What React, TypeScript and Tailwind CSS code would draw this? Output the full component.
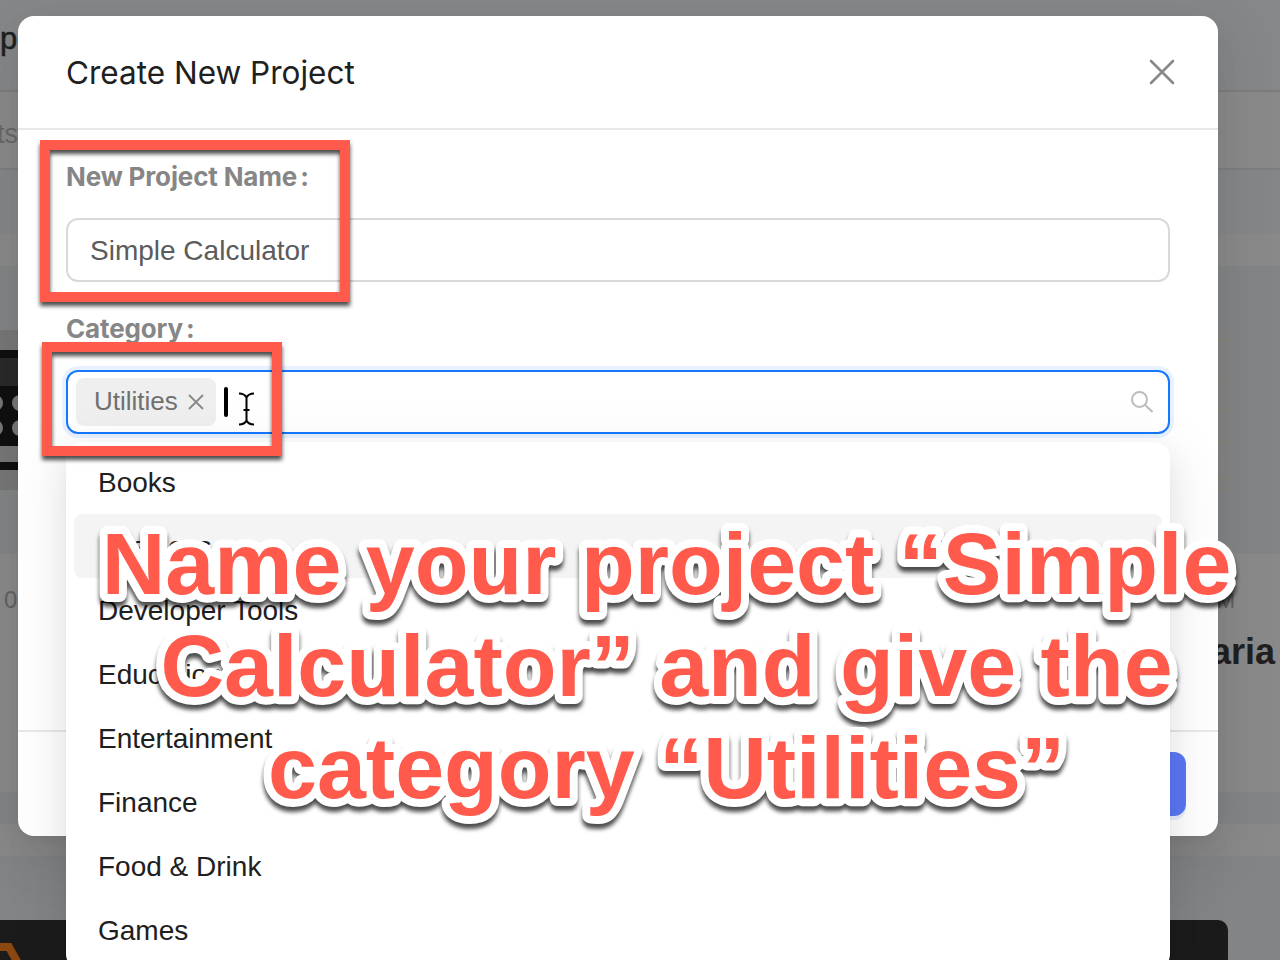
const options = ["Books", "Business", "Developer Tools", "Education", "Entertainment", "Finance", "Food & Drink", "Games"];
const lines = [
  { text: "Name your project “Simple", y: 594 },
  { text: "Calculator” and give the", y: 696 },
  { text: "category “Utilities”", y: 798 },
];

function Band({ className }: { className: string }) {
  return <div className={`w-full shrink-0 ${className}`} />;
}

function Backdrop() {
  return (
    <div className="flex h-[960px] w-[1280px] flex-col overflow-hidden bg-[#838485]">
      <div className="flex h-[92px] shrink-0 items-start border-b-2 border-[#7c7c7c] bg-[#868788] pt-[20px] text-[31px] leading-[38px] text-[#202020] [-webkit-text-stroke:0.5px_#202020]">
        <span>p</span>
      </div>
      <div className="flex h-[78px] shrink-0 items-start border-b-2 border-[#7e7e7e] bg-[#898989] pt-[24px] text-[27px] leading-[36px] text-[#686868]">
        <span className="-ml-[3px]">ts</span>
      </div>
      <Band className="h-[64px] bg-[#848688]" />
      <Band className="h-[32px] bg-[#898989]" />
      <div className="flex h-[288px] shrink-0 justify-between bg-[#838485]">
        <svg className="mt-[64px] h-[160px] w-[18px]" viewBox="0 0 18 160">
          <path fill="#777" d="M0 0h18v160H0z" />
          <path fill="#101010" d="M0 20h18v8H0zM0 56h18v60H0zM0 132h18v8H0z" />
          <path fill="#2a2a2a" d="M0 28h18v28H0z" />
          <g fill="#777">
            <circle cx="-5" cy="73" r="8" />
            <circle cx="-5" cy="98" r="8" />
            <circle cx="20" cy="73" r="8" />
            <circle cx="20" cy="98" r="8" />
          </g>
        </svg>
        <svg className="mt-[64px] mr-[52px] h-[160px] w-[12px]" viewBox="0 0 12 160" fill="none" stroke="#8a8271">
          <path d="M2 1h3a5 5 0 0 1 5 5v148a5 5 0 0 1-5 5H2M0 10.500h10M0 49.500h10M0 79.500h10M0 110.500h10M0 149.500h10M2 10l7-7M2 150l7 7" />
        </svg>
      </div>
      <div className="flex h-[238px] shrink-0 justify-between bg-[#898989]">
        <span className="mt-[31px] ml-[4px] text-[24px] leading-[30px] text-[#626262]">0</span>
        <div className="mr-[5px] flex flex-col items-end">
          <span className="mt-[32px] mr-[40px] text-[22px] leading-[30px] text-[#606060]">PM</span>
          <span className="mt-[13px] text-[36px] leading-[46px] font-bold text-[#202020]">aria</span>
        </div>
      </div>
      <Band className="h-[32px] bg-[#828486]" />
      <Band className="h-[32px] bg-[#898989]" />
      <Band className="h-[64px] bg-[#828486]" />
      <div className="flex h-[40px] w-[1228px] shrink-0 rounded-tr-[10px] bg-[#1b1b1b]">
        <svg className="h-[40px] w-[40px]" viewBox="0 0 40 40" fill="none" stroke="#8b4810" strokeWidth="8">
          <path d="M-8 27H9L20 47" />
        </svg>
      </div>
    </div>
  );
}

function Dialog() {
  return (
    <section className="absolute top-[16px] left-[18px] flex h-[820px] w-[1200px] flex-col overflow-hidden rounded-[16px] bg-white">
      <header className="flex h-[114px] shrink-0 items-center justify-between border-b-2 border-[#e8e8e8] pr-[43px] pl-[48px]">
        <h1 className="mt-[2px] font-['Inter',sans-serif] text-[31.500px] tracking-[0px] text-[#202020]">Create New Project</h1>
        <svg className="h-[26px] w-[26px]" viewBox="0 0 26 26" stroke="#888" strokeWidth="2.600" strokeLinecap="round"><path d="M2 2l22 22M24 2L2 24" /></svg>
      </header>
      <div className="flex grow flex-col px-[48px] pt-[29px] font-['Inter',sans-serif] text-[26px] leading-[36px] font-bold text-[#868686]">
        <label className="flex gap-[3px] tracking-[-0.15px]"><span>New Project Name</span><span>:</span></label>
        <div className="mt-[23px] flex h-[64px] shrink-0 items-center rounded-[12px] border-2 border-[#d9d9d9] px-[22px] pt-[2px] font-['Liberation_Sans',sans-serif] text-[28px] font-normal text-[#5b5b5b]">
          Simple Calculator
        </div>
        <label className="mt-[29px] flex gap-[3px] tracking-[-0.15px]"><span>Category</span><span>:</span></label>
        <div className="mt-[23px] flex h-[64px] shrink-0 items-center rounded-[12px] border-2 border-[#1677ff] px-[8px] font-['Liberation_Sans',sans-serif] text-[26px] font-normal text-[#707070] shadow-[0_0_0_4px_#e8f2ff]">
          <div className="flex h-[48px] w-[140px] items-center justify-between rounded-[8px] bg-[#efefef] pr-[11px] pl-[18px]">
            <span className="mb-[2px]">Utilities</span>
            <svg className="h-[18px] w-[18px]" viewBox="0 0 18 18" stroke="#888" strokeWidth="1.800"><path d="M2 2l14 14M16 2L2 16" /></svg>
          </div>
          <div className="ml-[8px] h-[30px] w-[4px] rounded-full bg-black" />
          <svg className="mt-[13px] ml-[10px] h-[34px] w-[17px]" viewBox="0 0 17 34" fill="none" stroke="#000" strokeWidth="2">
            <path d="M1 1.500c4 0 6 1.200 7.500 4C10 2.700 12 1.500 16 1.500M8.500 5v24M1 32.500c4 0 6-1 7.500-4 1.500 3 3.500 4 7.500 4M5.500 18h6" />
          </svg>
          <svg className="mr-[7px] ml-auto h-[22px] w-[22px]" viewBox="0 0 22 22" fill="none" stroke="#bdbdbd" strokeWidth="2"><circle cx="8.500" cy="8.500" r="7.500" /><path d="M14 14l7.500 7" /></svg>
        </div>
      </div>
      <footer className="flex h-[106px] shrink-0 justify-end border-t-2 border-[#e8e8e8] pt-[20px] pr-[32px]">
        <div className="h-[64px] w-[140px] rounded-[12px] bg-[#5b78f5] shadow-[0_4px_0_#e6effb]" />
      </footer>
    </section>
  );
}

export default function App() {
  return (
    <main className="relative h-[960px] w-[1288px] overflow-hidden bg-white font-['Liberation_Sans',sans-serif]">
      <Backdrop />
      <div className="absolute top-0 left-0 h-[960px] w-[1280px] overflow-hidden">
        <div className="absolute top-[16px] left-[18px] h-[820px] w-[1200px] rounded-[16px] shadow-[0_12px_32px_rgba(0,0,0,0.05),0_6px_12px_-8px_rgba(0,0,0,0.1),0_18px_56px_16px_rgba(0,0,0,0.05)]" />
        <Dialog />
        <ul className="absolute top-[442px] left-[66px] flex h-[528px] w-[1104px] flex-col rounded-[16px] bg-white p-[8px] text-[28px] text-[#202020] shadow-[0_12px_32px_rgba(0,0,0,0.08),0_6px_12px_-8px_rgba(0,0,0,0.12),0_18px_56px_16px_rgba(0,0,0,0.05)]">
          {options.map((o) => (
            <li key={o} className={`flex h-[64px] shrink-0 items-center rounded-[8px] px-[24px] pt-[2px] ${o === "Business" ? "bg-[#f4f4f4]" : ""}`}>{o}</li>
          ))}
        </ul>
        <div className="absolute top-[140px] left-[40px] h-[162px] w-[310px] border-[10px] border-[#ff5a4c] [filter:drop-shadow(0_4px_2px_rgba(0,0,0,0.7))]" />
        <div className="absolute top-[342px] left-[42px] h-[114px] w-[240px] border-[10px] border-[#ff5a4c] [filter:drop-shadow(0_4px_2px_rgba(0,0,0,0.7))]" />
        <svg className="absolute top-0 left-0 h-[960px] w-[1280px] [filter:drop-shadow(0_5px_2px_rgba(0,0,0,0.7))]" viewBox="0 0 1280 960">
          <g fill="#ff5a4c" stroke="#fff" strokeWidth="16" strokeLinejoin="round" paintOrder="stroke" fontSize="88" fontWeight="700" textAnchor="middle">
            {lines.map((l) => (
              <text key={l.y} x={666.5} y={l.y}>{l.text}</text>
            ))}
          </g>
        </svg>
      </div>
    </main>
  );
}
